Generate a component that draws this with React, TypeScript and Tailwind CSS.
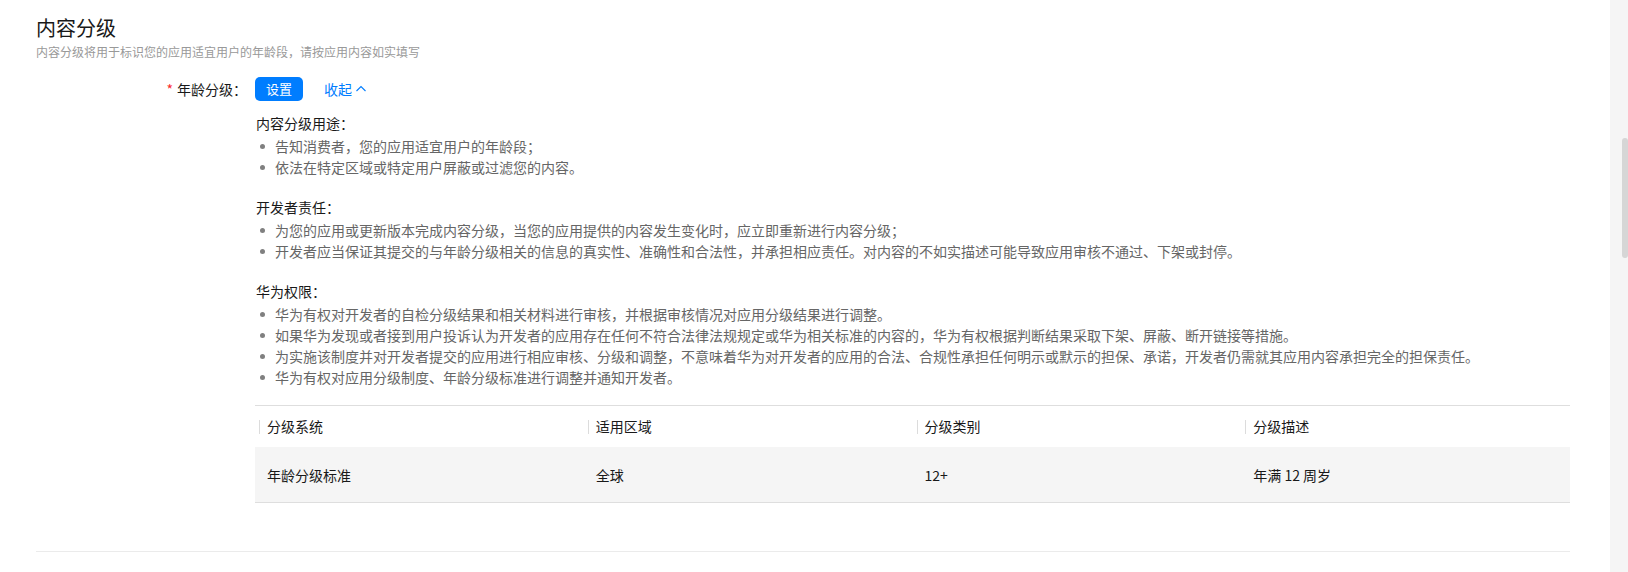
import React from "react";

const groups: { title: string; items: string[] }[] = [
  {
    title: "内容分级用途：",
    items: ["告知消费者，您的应用适宜用户的年龄段；", "依法在特定区域或特定用户屏蔽或过滤您的内容。"],
  },
  {
    title: "开发者责任：",
    items: [
      "为您的应用或更新版本完成内容分级，当您的应用提供的内容发生变化时，应立即重新进行内容分级；",
      "开发者应当保证其提交的与年龄分级相关的信息的真实性、准确性和合法性，并承担相应责任。对内容的不如实描述可能导致应用审核不通过、下架或封停。",
    ],
  },
  {
    title: "华为权限：",
    items: [
      "华为有权对开发者的自检分级结果和相关材料进行审核，并根据审核情况对应用分级结果进行调整。",
      "如果华为发现或者接到用户投诉认为开发者的应用存在任何不符合法律法规规定或华为相关标准的内容的，华为有权根据判断结果采取下架、屏蔽、断开链接等措施。",
      "为实施该制度并对开发者提交的应用进行相应审核、分级和调整，不意味着华为对开发者的应用的合法、合规性承担任何明示或默示的担保、承诺，开发者仍需就其应用内容承担完全的担保责任。",
      "华为有权对应用分级制度、年龄分级标准进行调整并通知开发者。",
    ],
  },
];

const headers = ["分级系统", "适用区域", "分级类别", "分级描述"];
const row = ["年龄分级标准", "全球", "12+", "年满 12 周岁"];

export default function App() {
  return (
    <div className="flex w-full h-[572px] bg-white overflow-hidden font-['Noto_Sans_CJK_SC','Noto_Sans',sans-serif]">
      <div className="flex-1 min-w-0 pl-[36px] pr-[40px] pt-[14px]">
        <div className="text-[20px] leading-[28px] text-[#191919]">内容分级</div>
        <div className="mt-[1px] text-[12px] leading-[18px] text-[#999999]">
          内容分级将用于标识您的应用适宜用户的年龄段，请按应用内容如实填写
        </div>

        <div className="flex mt-[16px]">
          <div className="w-[219px] shrink-0 pr-[8px] text-right text-[14px] leading-[24px] text-[#191919]">
            <span className="text-[#fa2a2d] mr-[4px]">*</span>
            年龄分级：
          </div>
          <div className="flex-1 min-w-0">
            <div className="flex items-center h-[24px]">
              <button className="w-[48px] h-[24px] rounded-[5px] bg-[#007dff] text-white text-[13px] leading-[24px]">
                设置
              </button>
              <div className="ml-[21px] flex items-center text-[14px] text-[#007dff]">
                收起
                <svg width="12" height="12" viewBox="0 0 12 12" className="ml-[3px]" fill="none">
                  <polyline points="1.5,8 6,3.5 10.5,8" stroke="#007dff" strokeWidth="1.1" />
                </svg>
              </div>
            </div>

            <div className="mt-[12px] text-[14px] leading-[21px]">
              {groups.map((g, gi) => (
                <div key={gi} className={gi > 0 ? "mt-[19px]" : ""}>
                  <div className="pl-[1px] text-[#191919] mb-[2px]">{g.title}</div>
                  {g.items.map((it, ii) => (
                    <div key={ii} className="flex items-center pl-[5px] text-[#666666] whitespace-nowrap">
                      <span className="w-[5px] h-[5px] rounded-full bg-[#808080] mr-[10px] shrink-0" />
                      {it}
                    </div>
                  ))}
                </div>
              ))}
            </div>

            <div className="mt-[17px] border-t border-b border-[#dedede] text-[14px] text-[#191919]">
              <div className="grid grid-cols-4 h-[41px] items-center">
                {headers.map((h) => (
                  <div key={h} className="flex items-center pl-[4px]">
                    <span className="w-px h-[14px] bg-[#dcdcdc] mr-[7px]" />
                    {h}
                  </div>
                ))}
              </div>
              <div className="grid grid-cols-4 h-[55px] items-center bg-[#f5f5f5]">
                {row.map((c) => (
                  <div key={c} className="pl-[12px] pt-[2px]">
                    {c}
                  </div>
                ))}
              </div>
            </div>
          </div>
        </div>

        <div className="mt-[48px] border-t border-[#ebebeb]" />
      </div>

      <div className="w-[18px] shrink-0 h-full bg-[#f5f5f5] flex justify-end">
        <div className="w-[6px] h-[120px] mt-[138px] rounded-full bg-[#d6d6d6]" />
      </div>
    </div>
  );
}
